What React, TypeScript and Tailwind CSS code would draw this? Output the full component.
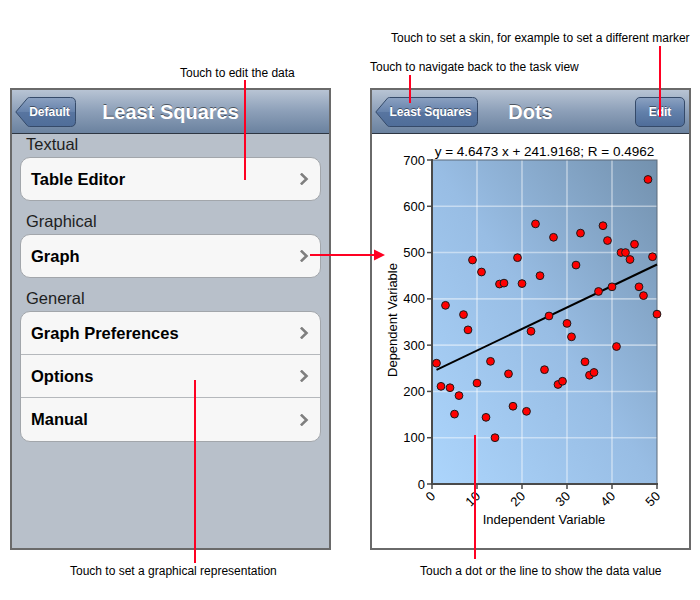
import React from "react";

const DATA = [261,211,386,208,151,191,366,333,484,218,458,144,265,100,432,434,238,168,489,433,157,330,562,450,247,363,533,215,222,347,318,473,542,264,235,241,416,558,526,426,297,500,500,485,518,426,407,658,491,367];

const X0 = 432, X1 = 657, Y0 = 484, YTOP = 160;
const sx = (v: number) => X0 + (v * (X1 - X0)) / 50;
const sy = (v: number) => Y0 - (v * (Y0 - YTOP)) / 700;

function BackButton({ label, width, gid }: { label: string; width: number; gid: string }) {
  const w = width;
  const h = 30;
  const d = `M0.8 15 L12.5 1.2 Q13.3 0.5 14.5 0.5 H${w - 5.5} Q${w - 0.5} 0.5 ${w - 0.5} 5.5 V${h - 5.5} Q${w - 0.5} ${h - 0.5} ${w - 5.5} ${h - 0.5} H14.5 Q13.3 ${h - 0.5} 12.5 ${h - 1.2} Z`;
  return (
    <div className="relative flex h-[30px] items-center justify-center pl-[10px] pr-[2px]" style={{ width: w }}>
      <svg className="absolute inset-0" width={w} height={h} viewBox={`0 0 ${w} ${h}`}>
        <defs>
          <linearGradient id={gid} x1="0" y1="0" x2="0" y2="1">
            <stop offset="0" stopColor="#8ba1c1" />
            <stop offset="0.5" stopColor="#6682ab" />
            <stop offset="0.5" stopColor="#5875a0" />
            <stop offset="1" stopColor="#4f6d99" />
          </linearGradient>
        </defs>
        <path d={d} fill={`url(#${gid})`} stroke="#354a69" strokeWidth="1" />
      </svg>
      <span className="relative text-[12px] font-bold text-white [text-shadow:0_-1px_0_rgba(0,0,0,0.45)]">{label}</span>
    </div>
  );
}

function EditButton() {
  return (
    <div className="mr-[1px] flex h-[30px] w-[50px] items-center justify-center rounded-[5px] border border-[#354a69] bg-linear-to-b from-[#8ba1c1] via-[#6280aa] to-[#4f6d99] text-[12px] font-bold text-white [text-shadow:0_-1px_0_rgba(0,0,0,0.45)]">
      Edit
    </div>
  );
}

function NavBar({ left, title, right }: { left: React.ReactNode; title: string; right?: React.ReactNode }) {
  return (
    <div className="grid h-[44px] grid-cols-[1fr_auto_1fr] items-center border-b border-[#2d3642] bg-linear-to-b from-[#b8c4d4] via-[#8c9fb8] to-[#6b829f] px-[3px]">
      <div className="flex justify-start">{left}</div>
      <div className="text-[20px] font-bold text-white [text-shadow:0_-1px_0_rgba(0,0,0,0.5)]">{title}</div>
      <div className="flex justify-end">{right}</div>
    </div>
  );
}

function Chevron() {
  return (
    <svg width="9" height="12" viewBox="0 0 9 12">
      <polyline points="1.8,1.5 6.5,6 1.8,10.5" fill="none" stroke="#7f7f7f" strokeWidth="2.6" strokeLinecap="square" />
    </svg>
  );
}

function Cell({ label, last, tall }: { label: string; last: boolean; tall: boolean }) {
  return (
    <div
      className={`flex items-center justify-between pl-[10px] pr-[11px] ${tall ? "h-[43px]" : "h-[42px]"} ${
        last ? "" : "border-b border-[#b5b8bc]"
      }`}
    >
      <span className="text-[16.5px] font-bold text-black">{label}</span>
      <Chevron />
    </div>
  );
}

function Group({ header, items, first = false }: { header: string; items: string[]; first?: boolean }) {
  return (
    <div className={first ? "" : "mt-[10px]"}>
      <div className="pl-[14px] text-[16.5px] leading-[20px] text-[#1e1e1e]">{header}</div>
      <div className="mx-[8px] mt-[3px] overflow-hidden rounded-[10px] border border-[#a2a6ab] bg-[#f7f7f7]">
        {items.map((it, i) => (
          <Cell key={it} label={it} last={i === items.length - 1} tall={items.length > 1} />
        ))}
      </div>
    </div>
  );
}

function Chart() {
  const yTicks = [0, 100, 200, 300, 400, 500, 600, 700];
  const xTicks = [0, 10, 20, 30, 40, 50];
  return (
    <svg width="317" height="414" viewBox="372 134 317 414" className="block">
      <defs>
        <linearGradient id="plotbg" x1="0" y1="1" x2="1" y2="0">
          <stop offset="0" stopColor="#acd5fc" />
          <stop offset="0.5" stopColor="#98bde4" />
          <stop offset="1" stopColor="#7391ae" />
        </linearGradient>
      </defs>
      <text x="544.5" y="155.5" textAnchor="middle" fontSize="13.5" fill="#000">
        y = 4.6473 x + 241.9168; R = 0.4962
      </text>
      <rect x={X0} y={YTOP} width={X1 - X0} height={Y0 - YTOP} fill="url(#plotbg)" />
      {xTicks.slice(1, -1).map((t) => (
        <line key={"gx" + t} x1={sx(t)} x2={sx(t)} y1={YTOP} y2={Y0} stroke="#ffffff" strokeOpacity="0.45" strokeWidth="1.6" />
      ))}
      {yTicks.slice(1, -1).map((t) => (
        <line key={"gy" + t} x1={X0} x2={X1} y1={sy(t)} y2={sy(t)} stroke="#ffffff" strokeOpacity="0.45" strokeWidth="1.6" />
      ))}
      <rect x={X0} y={YTOP} width={X1 - X0} height={Y0 - YTOP} fill="none" stroke="#5d6b7a" strokeWidth="1" />
      <line x1={X0} x2={X0} y1={YTOP - 1} y2={Y0 + 1} stroke="#4a4a4a" strokeWidth="2" />
      <line x1={X0 - 1} x2={X1 + 1} y1={Y0} y2={Y0} stroke="#4a4a4a" strokeWidth="2" />
      {yTicks.map((t) => (
        <g key={"ty" + t}>
          <line x1={X0 - 5} x2={X0} y1={sy(t)} y2={sy(t)} stroke="#4a4a4a" strokeWidth="1.5" />
          <text x={425} y={sy(t) + 4.5} textAnchor="end" fontSize="13" fill="#000">
            {t}
          </text>
        </g>
      ))}
      {xTicks.map((t) => (
        <g key={"tx" + t}>
          <line x1={sx(t)} x2={sx(t)} y1={Y0} y2={Y0 + 5} stroke="#4a4a4a" strokeWidth="1.5" />
          <text
            x={sx(t) + 4}
            y={Y0 + 13}
            textAnchor="end"
            fontSize="13"
            fill="#000"
            transform={`rotate(-45 ${sx(t) + 4} ${Y0 + 13})`}
          >
            {t}
          </text>
        </g>
      ))}
      <text x="544" y="523.5" textAnchor="middle" fontSize="13" fill="#000">
        Independent Variable
      </text>
      <text x="397" y="320" textAnchor="middle" fontSize="13" fill="#000" transform="rotate(-90 397 320)">
        Dependent Variable
      </text>
      <line x1={sx(1)} y1={sy(4.6473 * 1 + 241.9168)} x2={sx(50)} y2={sy(4.6473 * 50 + 241.9168)} stroke="#000" strokeWidth="2" />
      {DATA.map((v, i) => (
        <circle key={i} cx={sx(i + 1)} cy={sy(v)} r="3.9" fill="#ff0000" stroke="#1a1a1a" strokeWidth="1" />
      ))}
    </svg>
  );
}

function Note({ text, className }: { text: string; className: string }) {
  return <div className={`absolute whitespace-nowrap text-[12px] leading-[14px] text-black ${className}`}>{text}</div>;
}

export default function App() {
  return (
    <div className="relative h-[600px] w-[700px] overflow-hidden bg-white font-['Liberation_Sans',Arial,sans-serif]">
      <div className="flex gap-[39px] pl-[10px] pt-[88px]">
        <div className="flex h-[462px] w-[321px] flex-col border-2 border-[#6a6a6a] bg-[#b8c0ca]">
          <NavBar left={<BackButton label="Default" width={61} gid="bbDefault" />} title="Least Squares" />
          <div className="flex flex-col">
            <Group first header="Textual" items={["Table Editor"]} />
            <Group header="Graphical" items={["Graph"]} />
            <Group header="General" items={["Graph Preferences", "Options", "Manual"]} />
          </div>
        </div>
        <div className="flex h-[462px] w-[321px] flex-col border-2 border-[#6a6a6a] bg-white">
          <NavBar left={<BackButton label="Least Squares" width={103} gid="bbLeast" />} title="Dots" right={<EditButton />} />
          <Chart />
        </div>
      </div>

      <Note text="Touch to set a skin, for example to set a different marker" className="left-[391px] top-[31px]" />
      <Note text="Touch to navigate back to the task view" className="left-[370px] top-[60px]" />
      <Note text="Touch to edit the data" className="left-[180px] top-[66px]" />
      <Note text="Touch to set a graphical representation" className="left-[70px] top-[564px]" />
      <Note text="Touch a dot or the line to show the data value" className="left-[420px] top-[564px]" />

      <div className="absolute left-[244px] top-[80px] h-[100px] w-[2px] bg-[#ff0022]" />
      <div className="absolute left-[659px] top-[46px] h-[71px] w-[2px] bg-[#ff0022]" />
      <div className="absolute left-[409px] top-[75px] h-[28px] w-[2px] bg-[#ff0022]" />
      <div className="absolute left-[194px] top-[380px] h-[183px] w-[2px] bg-[#ff0022]" />
      <div className="absolute left-[474px] top-[435px] h-[124px] w-[2px] bg-[#ff0022]" />
      <div className="absolute left-[310px] top-[254px] h-[2px] w-[67px] bg-[#ff0022]" />
      <svg className="absolute left-[374px] top-[249px]" width="12" height="12" viewBox="0 0 12 12">
        <polygon points="0,0.5 11,6 0,11.5" fill="#ff0022" />
      </svg>
    </div>
  );
}
